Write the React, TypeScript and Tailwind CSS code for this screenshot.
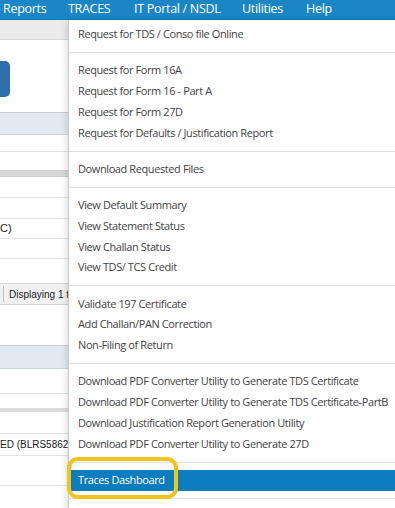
import type { ReactNode } from 'react';

type MenuEntry = { label: string } | { sep: true };

const menu: MenuEntry[] = [
  { label: 'Request for TDS / Conso file Online' },
  { sep: true },
  { label: 'Request for Form 16A' },
  { label: 'Request for Form 16 - Part A' },
  { label: 'Request for Form 27D' },
  { label: 'Request for Defaults / Justification Report' },
  { sep: true },
  { label: 'Download Requested Files' },
  { sep: true },
  { label: 'View Default Summary' },
  { label: 'View Statement Status' },
  { label: 'View Challan Status' },
  { label: 'View TDS/ TCS Credit' },
  { sep: true },
  { label: 'Validate 197 Certificate' },
  { label: 'Add Challan/PAN Correction' },
  { label: 'Non-Filing of Return' },
  { sep: true },
  { label: 'Download PDF Converter Utility to Generate TDS Certificate' },
  { label: 'Download PDF Converter Utility to Generate TDS Certificate-PartB' },
  { label: 'Download Justification Report Generation Utility' },
  { label: 'Download PDF Converter Utility to Generate 27D' },
  { sep: true },
];

const navItems = [
  { label: 'Reports', w: 'w-[65px]' },
  { label: 'TRACES', w: 'w-[66px]' },
  { label: 'IT Portal / NSDL', w: 'w-[108px]' },
  { label: 'Utilities', w: 'w-[64px]' },
  { label: 'Help', w: 'w-[60px]' },
];

function Row({ h, className = '', children }: { h: string; className?: string; children?: ReactNode }) {
  return (
    <div className={`${h} ${className} flex items-center whitespace-nowrap`}>
      {children && <div className="w-[68px] overflow-hidden flex items-center">{children}</div>}
    </div>
  );
}

function PageBehind() {
  return (
    <div className="flex flex-col font-['Liberation_Sans',Arial,sans-serif] text-[10px] text-[#222]">
      <Row h="h-[20px]" className="bg-[#ebebeb] border-b border-[#d6d6d6]" />
      <div className="h-[73px] pt-[21px] border-b border-[#c5ccd5]">
        <div className="w-[10px] h-[36px] rounded-r-[5px] bg-[#2f6fae]" />
      </div>
      <Row h="h-[22px]" className="bg-[#e3e9f1] border-b border-[#cfd6de]" />
      <Row h="h-[17px]" className="border-b border-[#e2e2e2]" />
      <Row h="h-[18px]" />
      <Row h="h-[7px]" className="bg-[#d9d9d9] border-y border-[#cdcdcd]" />
      <Row h="h-[21px]" className="border-b border-[#e4e4e4]" />
      <Row h="h-[21px]" className="border-b border-[#e4e4e4]" />
      <Row h="h-[20px]" className="border-b border-[#e4e4e4] text-[11px]">C)</Row>
      <Row h="h-[20px]" className="border-b border-[#e4e4e4]" />
      <Row h="h-[25px]" className="border-b border-[#d8d8d8]" />
      <Row h="h-[21px]" className="bg-[#f1f1f1] border-b border-[#d4d4d4]">
        <span className="ml-[3px] mr-[5px] h-[16px] border-l border-[#c4c4c4]" />
        <span>Displaying 1 to 10 of 10</span>
      </Row>
      <Row h="h-[41px]" className="border-b border-[#c5ccd5]" />
      <Row h="h-[23px]" className="bg-[#e3e9f1] border-b border-[#cfd6de]" />
      <Row h="h-[25px]" className="border-b border-[#e2e2e2]" />
      <Row h="h-[14px]" />
      <Row h="h-[4px]" className="bg-[#dcdcdc]" />
      <Row h="h-[22px]" className="border-b border-[#e4e4e4]" />
      <Row h="h-[22px]" className="border-b border-[#e4e4e4]">ED (BLRS58626K)</Row>
      <Row h="h-[30px]" className="border-b border-[#e4e4e4]" />
      <Row h="h-[21px]" />
    </div>
  );
}

export default function App() {
  return (
    <div className="w-[395px] h-[508px] overflow-hidden bg-white relative">
      <nav className="h-[20px] bg-[#1a86c6] border-b border-[#1677b0] flex items-center text-white text-[12.5px] tracking-[-0.3px] font-['Open_Sans',sans-serif] pl-[3px]">
        {navItems.map((n) => (
          <div key={n.label} className={`${n.w} shrink-0 whitespace-nowrap leading-none`}>
            {n.label}
          </div>
        ))}
      </nav>

      <div className="relative">
        <PageBehind />

        <div className="absolute left-[68px] top-0 w-[360px] bg-white border-l border-[#c9c9c9] shadow-[-2px_2px_6px_rgba(0,0,0,0.12)] pt-[4px] font-['Open_Sans',sans-serif] text-[11px] text-[#444]">
          {menu.map((m, i) =>
            'sep' in m ? (
              <div key={i} className="h-[15.5px] flex items-center">
                <div className="w-full h-px bg-[#e1e1e1]" />
              </div>
            ) : (
              <div key={i} className="h-[20.75px] flex items-center pl-[9px] whitespace-nowrap tracking-[-0.4px]">
                {m.label}
              </div>
            )
          )}
          <div className="h-[21px] ml-[2px] flex items-center pl-[7px] bg-[#0b7cbe] text-white whitespace-nowrap tracking-[-0.4px]">
            Traces Dashboard
          </div>
          <div className="h-[15px] flex items-center">
            <div className="w-full h-px bg-[#e1e1e1]" />
          </div>
          <div className="h-[20px]" />

          {/* yellow annotation ring */}
          <div className="absolute left-[-2px] top-[437px] w-[111px] h-[42px] rounded-[11px] border-[4px] border-[#f2c31c]" />
        </div>
      </div>
    </div>
  );
}
